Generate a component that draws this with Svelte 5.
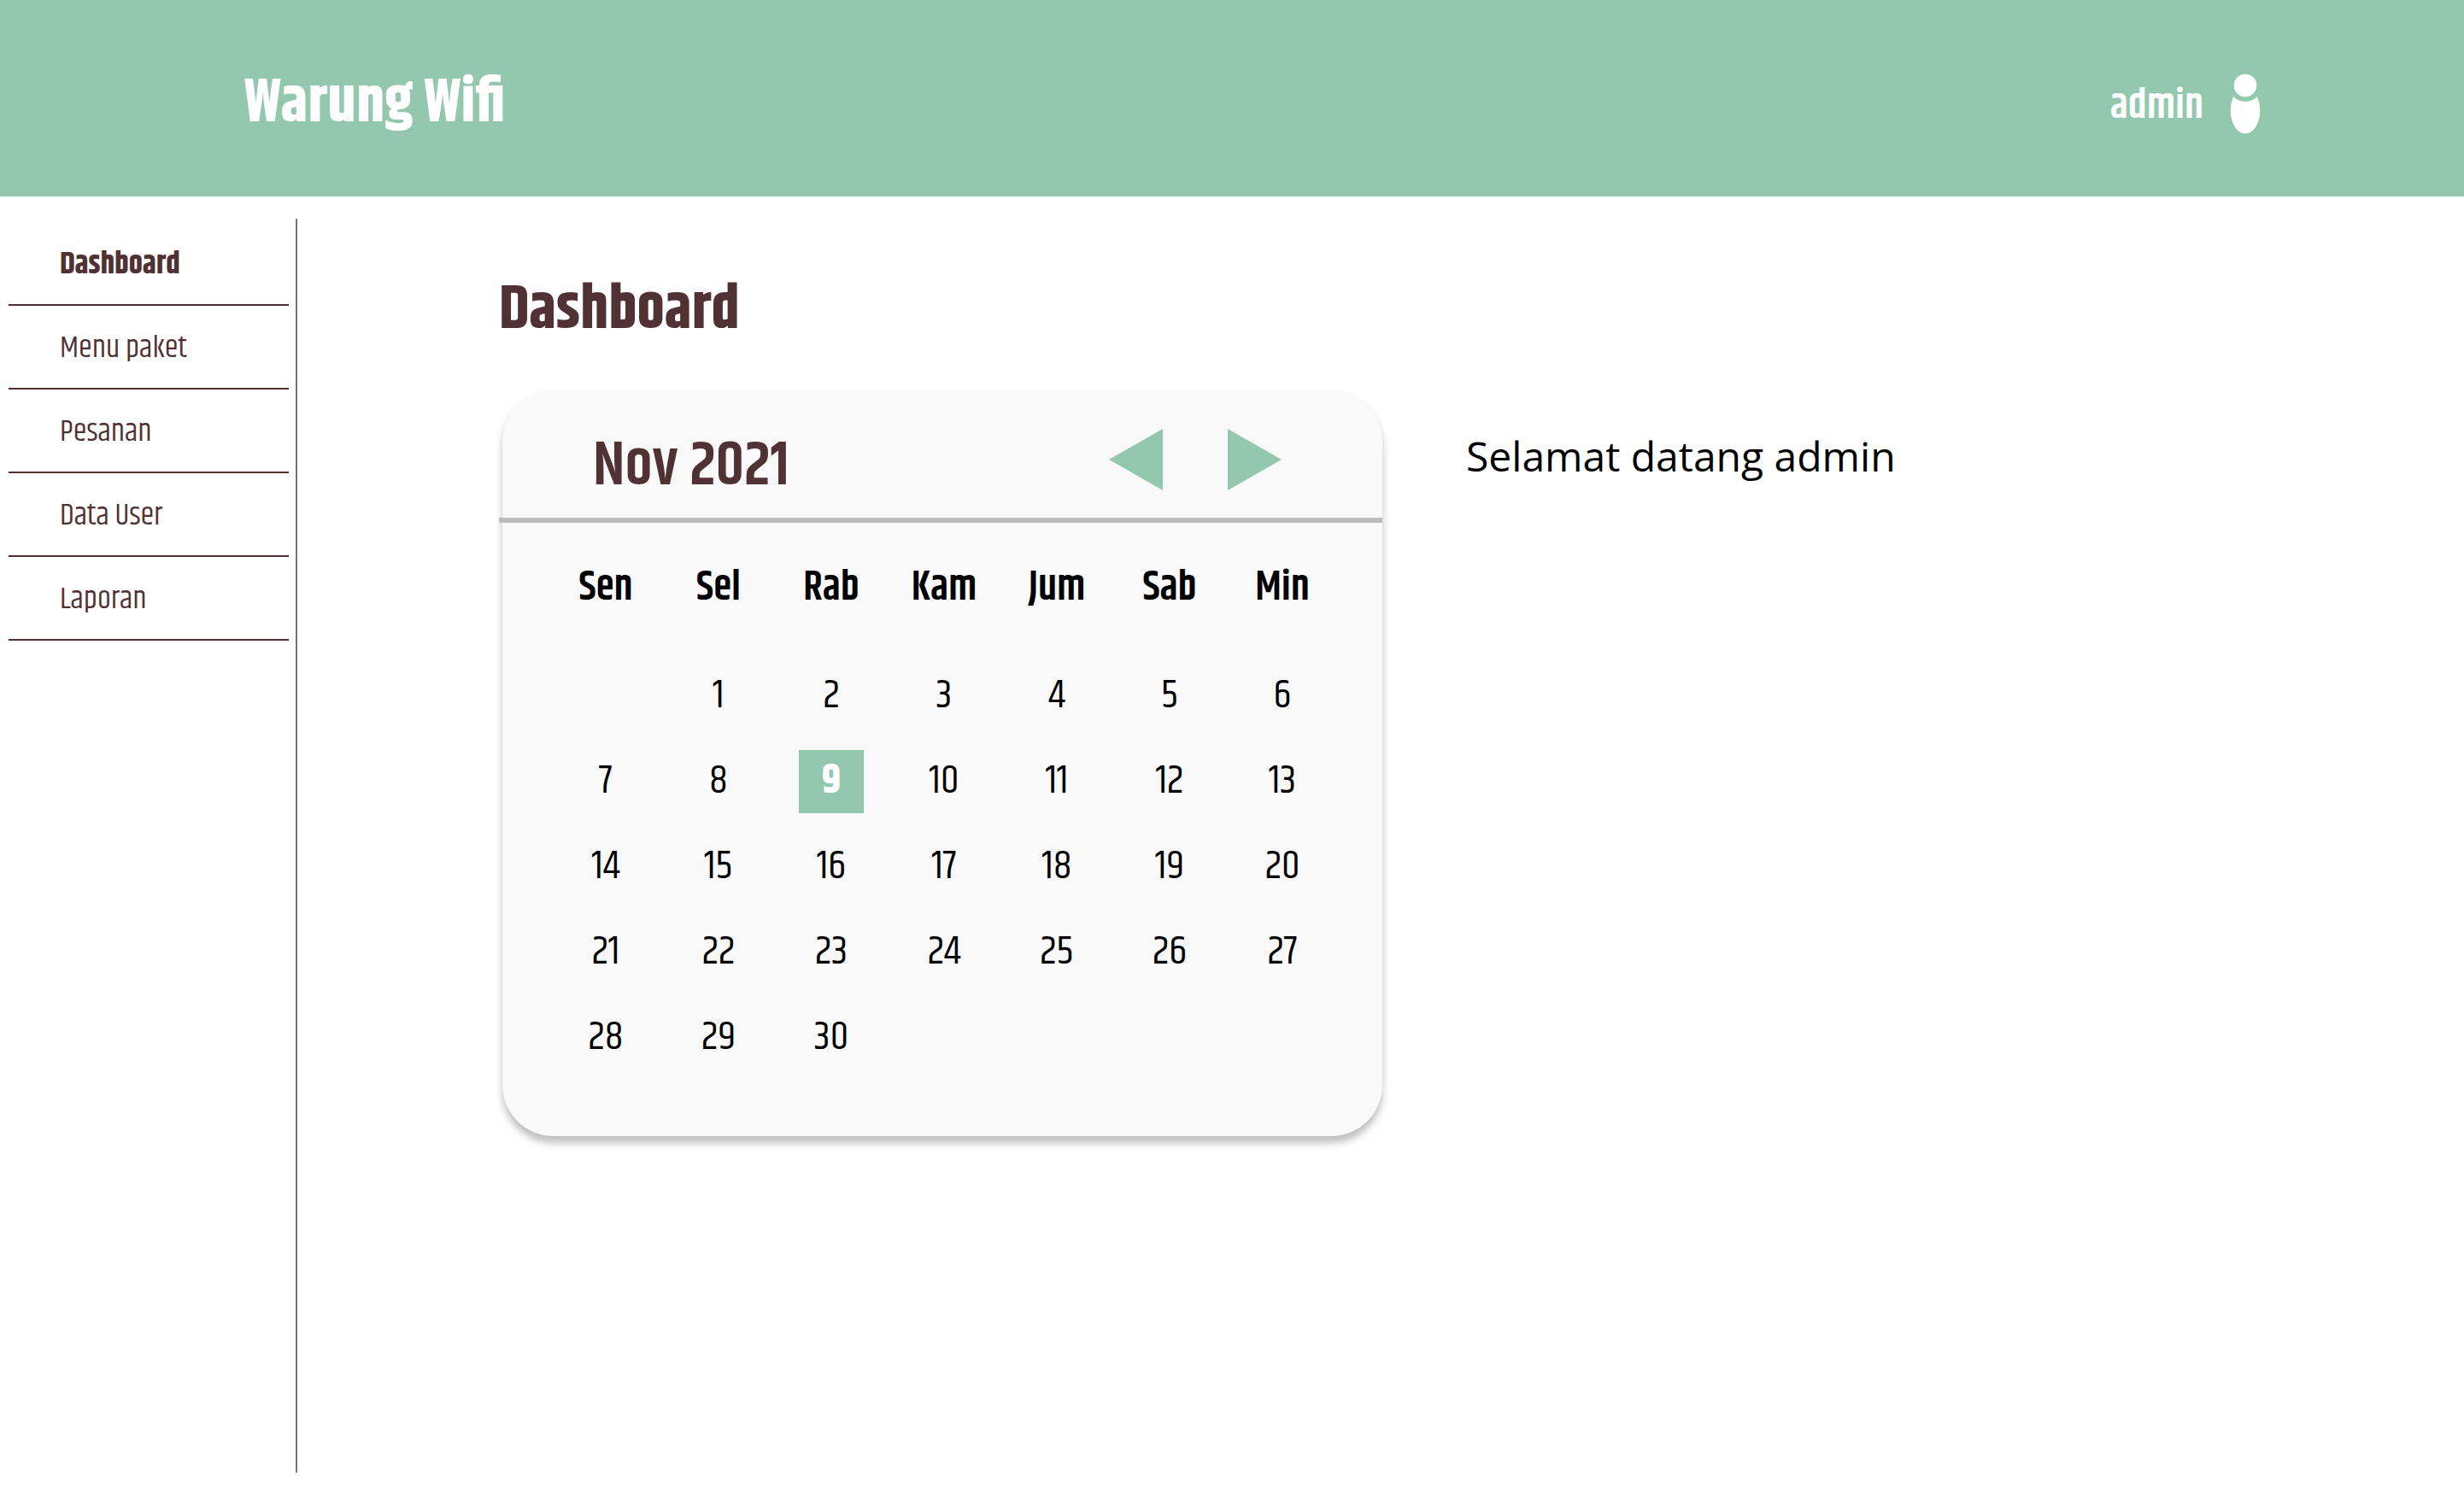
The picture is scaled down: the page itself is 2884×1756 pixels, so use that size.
<script>
  const menu = ['Dashboard', 'Menu paket', 'Pesanan', 'Data User', 'Laporan'];
  const weekdays = ['Sen', 'Sel', 'Rab', 'Kam', 'Jum', 'Sab', 'Min'];
  const today = 9;
  const weeks = Array.from({ length: 5 }, (_, w) =>
    Array.from({ length: 7 }, (_, d) => {
      const day = w * 7 + d;
      return day >= 1 && day <= 30 ? day : null;
    })
  );
  let active = $state('Dashboard');
</script>

<div class="page">
  <header>
    <a class="brand" href="#home">Warung Wifi</a>
    <button class="account" type="button">
      <span>admin</span>
      <svg viewBox="0 0 36 72" width="36" height="72" aria-hidden="true">
        <defs>
          <mask id="collar">
            <rect width="36" height="72" fill="#fff" />
            <circle cx="18" cy="15" r="19" fill="#000" />
          </mask>
        </defs>
        <circle cx="18" cy="15" r="13.3" fill="#fff" />
        <ellipse cx="18" cy="44.5" rx="17.3" ry="27" fill="#fff" mask="url(#collar)" />
      </svg>
    </button>
  </header>

  <div class="body">
    <nav>
      <ul>
        {#each menu as item}
          <li>
            <a href="#{item}" class:active={item === active} onclick={() => (active = item)}>{item}</a>
          </li>
        {/each}
      </ul>
    </nav>

    <main>
      <h1>Dashboard</h1>
      <div class="row">
        <section class="calendar">
          <div class="month">
            <h2>Nov 2021</h2>
            <div class="arrows">
              <button type="button" aria-label="Bulan sebelumnya">
                <svg viewBox="0 0 63 72" width="63" height="72"><path d="M63 0V72L0 36Z" fill="#94c8ae" /></svg>
              </button>
              <button type="button" aria-label="Bulan berikutnya">
                <svg viewBox="0 0 63 72" width="63" height="72"><path d="M0 0V72L63 36Z" fill="#94c8ae" /></svg>
              </button>
            </div>
          </div>
          <table>
            <thead>
              <tr>
                {#each weekdays as name}<th scope="col">{name}</th>{/each}
              </tr>
            </thead>
            <tbody>
              {#each weeks as week}
                <tr>
                  {#each week as day}
                    <td>{#if day}<span class:today={day === today}>{day}</span>{/if}</td>
                  {/each}
                </tr>
              {/each}
            </tbody>
          </table>
        </section>
        <p>Selamat datang admin</p>
      </div>
    </main>
  </div>
</div>

<style>
  :global(body) {
    background: #fff;
  }
  .page {
    min-height: 100vh;
    display: flex;
    flex-direction: column;
    font-family: Khand, 'Roboto Condensed', 'Liberation Sans Narrow', Roboto, sans-serif;
    color: #000;
  }
  header {
    height: 230px;
    box-sizing: border-box;
    padding: 12px 238px 0 286px;
    display: flex;
    align-items: center;
    justify-content: space-between;
    background: #94c8ae;
  }
  .brand {
    color: #fff;
    font-size: 72px;
    font-weight: 700;
    text-decoration: none;
  }
  button {
    padding: 0;
    border: 0;
    background: none;
    font: inherit;
    cursor: pointer;
  }
  svg {
    display: block;
  }
  .account {
    display: flex;
    align-items: center;
    gap: 31px;
    color: #fff;
    font-size: 48px;
    font-weight: 600;
  }
  .account span {
    padding-top: 6px;
  }
  .body {
    flex: 1;
    display: flex;
    padding: 26px 0 32px;
  }
  nav {
    flex: 0 0 346px;
    border-right: 2px solid #857071;
  }
  ul {
    list-style: none;
    margin: 4px 8px 0 10px;
    padding: 0;
  }
  li a {
    display: block;
    padding: 4px 0 0 60px;
    border-bottom: 2px solid #513234;
    color: #513234;
    font-size: 36px;
    font-weight: 400;
    line-height: 92px;
    text-decoration: none;
  }
  li a.active {
    font-weight: 700;
  }
  main {
    flex: 1;
    min-width: 0;
    padding: 67px 40px 0 236px;
  }
  h1,
  h2 {
    margin: 0;
    color: #513234;
    font-size: 72px;
    line-height: 80px;
  }
  h1 {
    font-weight: 700;
  }
  .row {
    display: flex;
    align-items: flex-start;
    gap: 98px;
    margin: 53px 0 0 4px;
  }
  .calendar {
    flex: 0 1 1030px;
    border-radius: 60px;
    background: #f9f9f9;
    box-shadow: 0 8px 8px rgba(0, 0, 0, 0.25);
  }
  .month {
    display: flex;
    align-items: center;
    justify-content: space-between;
    height: 156px;
    box-sizing: border-box;
    margin-left: -4px;
    padding: 14px 118px 0 110px;
    border-bottom: 6px solid #bcbcbc;
  }
  h2 {
    padding-top: 16px;
    font-weight: 600;
  }
  .arrows {
    display: flex;
    gap: 76px;
  }
  table {
    width: calc(100% - 106px);
    margin: 0 51px 65px 55px;
    border-collapse: collapse;
    table-layout: fixed;
    font-size: 48px;
  }
  th,
  td {
    padding: 0;
    text-align: center;
    font-weight: 400;
  }
  th {
    height: 153px;
    font-weight: 600;
  }
  td {
    height: 100px;
  }
  td span {
    display: inline-block;
    width: 76px;
    line-height: 74px;
  }
  .today {
    background: #94c8ae;
    color: #fff;
    font-weight: 700;
  }
  p {
    margin: 42px 0 0;
    font-family: 'Open Sans', sans-serif;
    font-size: 48px;
    line-height: 72px;
  }
</style>
